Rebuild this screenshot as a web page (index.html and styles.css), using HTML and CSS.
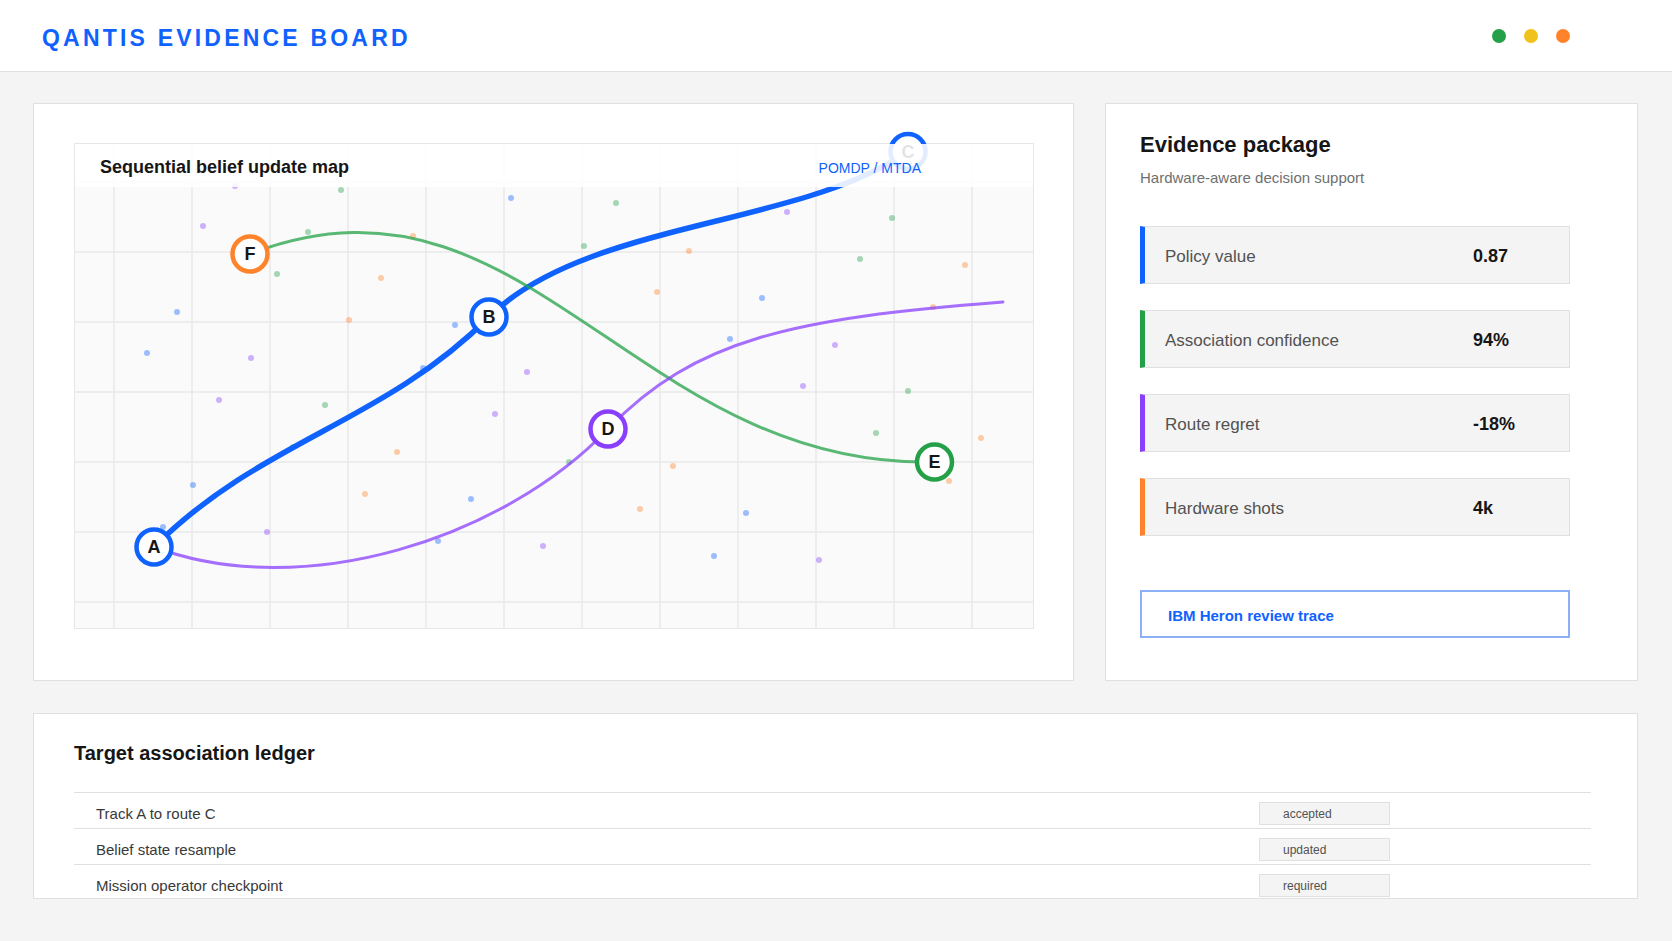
FILE: index.html
```html
<!DOCTYPE html>
<html lang="en">
<head>
  <meta charset="UTF-8">
  <title>Qantis Evidence Board</title>
  <link rel="stylesheet" href="styles.css">
</head>
<body>

  <header class="topbar">
    <h1 class="brand">QANTIS EVIDENCE BOARD</h1>
    <div class="signals">
      <span class="signal green"></span>
      <span class="signal yellow"></span>
      <span class="signal orange"></span>
    </div>
  </header>

  <main class="board">
    <section class="card map-card">
      <div class="map">
        <svg class="map-svg" viewBox="1 1 958 484">
          <g id="grid" class="grid"></g>
          <g id="dots"></g>
          <path class="route blue" d="M80 404 C187 297 308 281 415 174 C511 78 726 84 834 8.5"/>
          <path class="route green" d="M176 111 C450 5 560 326 860 319"/>
          <path class="route purple" d="M80 404 C230 460 430 395 534 286 C620 196 720 175 929 159"/>
          <g class="node blue"><circle cx="80" cy="404" r="17.5"/><text x="80" y="404">A</text></g>
          <g class="node blue"><circle cx="415" cy="174" r="17.5"/><text x="415" y="174">B</text></g>
          <g class="node blue"><circle cx="834" cy="8.5" r="17.5"/><text x="834" y="8.5">C</text></g>
          <g class="node purple"><circle cx="534" cy="286" r="17.5"/><text x="534" y="286">D</text></g>
          <g class="node green"><circle cx="860.5" cy="319" r="17.5"/><text x="860.5" y="319">E</text></g>
          <g class="node orange"><circle cx="176" cy="111" r="17.5"/><text x="176" y="111">F</text></g>
        </svg>
        <div class="map-head">
          <h2>Sequential belief update map</h2>
          <span class="map-tag">POMDP / MTDA</span>
        </div>
      </div>
    </section>

    <aside class="card evidence">
      <h2>Evidence package</h2>
      <p class="sub">Hardware-aware decision support</p>
      <div class="metrics">
        <div class="metric blue"><span>Policy value</span><strong>0.87</strong></div>
        <div class="metric green"><span>Association confidence</span><strong>94%</strong></div>
        <div class="metric purple"><span>Route regret</span><strong>-18%</strong></div>
        <div class="metric orange"><span>Hardware shots</span><strong>4k</strong></div>
      </div>
      <button class="trace-btn">IBM Heron review trace</button>
    </aside>

    <section class="card ledger">
      <h2>Target association ledger</h2>
      <div class="ledger-table">
        <div class="ledger-row"><span>Track A to route C</span><span class="badge">accepted</span></div>
        <div class="ledger-row"><span>Belief state resample</span><span class="badge">updated</span></div>
        <div class="ledger-row"><span>Mission operator checkpoint</span><span class="badge">required</span></div>
      </div>
    </section>
  </main>

  <script>
    const NS = 'http://www.w3.org/2000/svg';
    const grid = document.getElementById('grid');
    const dotLayer = document.getElementById('dots');

    function line(x1, y1, x2, y2) {
      const l = document.createElementNS(NS, 'line');
      l.setAttribute('x1', x1); l.setAttribute('y1', y1);
      l.setAttribute('x2', x2); l.setAttribute('y2', y2);
      grid.appendChild(l);
    }

    for (let k = 0; k < 12; k++) line(40 + 78 * k, 0, 40 + 78 * k, 486);
    for (let k = 0; k < 7; k++) line(0, 39 + 70 * k, 960, 39 + 70 * k);

    // scattered belief samples
    const dots = [
      [161,43,'p'],[267,47,'g'],[437,55,'b'],[542,60,'g'],[129,83,'p'],[234,89,'g'],
      [339,93,'o'],[713,69,'p'],[818,75,'g'],[510,103,'g'],[615,108,'o'],[786,116,'g'],
      [891,122,'o'],[203,131,'g'],[307,135,'o'],[583,149,'o'],[688,155,'b'],[859,164,'o'],
      [103,169,'b'],[275,177,'o'],[381,182,'b'],[656,196,'b'],[761,202,'p'],[73,210,'b'],
      [177,215,'p'],[349,225,'b'],[453,229,'p'],[729,243,'p'],[834,248,'g'],[145,257,'p'],
      [251,262,'g'],[421,271,'p'],[802,290,'g'],[907,295,'o'],[219,304,'g'],[323,309,'o'],
      [495,319,'g'],[599,323,'o'],[875,338,'o'],[119,342,'b'],[291,351,'o'],[397,356,'b'],
      [566,366,'o'],[672,370,'b'],[89,384,'b'],[193,389,'p'],[364,398,'b'],[469,403,'p'],
      [640,413,'b'],[745,417,'p']
    ];
    for (const [x, y, c] of dots) {
      const dot = document.createElementNS(NS, 'circle');
      dot.setAttribute('cx', x);
      dot.setAttribute('cy', y);
      dot.setAttribute('r', 3);
      dot.setAttribute('class', 'dot ' + c);
      dotLayer.appendChild(dot);
    }
  </script>

</body>
</html>
```

FILE: styles.css
```css
body {
  margin: 0;
  background: #f4f4f4;
  font-family: "Liberation Sans", Arial, sans-serif;
  color: #161616;
}
.topbar {
  height: 72px;
  box-sizing: border-box;
  background: #fff;
  border-bottom: 1px solid #e0e0e0;
  display: flex;
  justify-content: space-between;
  align-items: center;
  padding: 0 102px 0 42px;
}
.brand {
  margin: 5px 0 0;
  font-size: 23px;
  font-weight: bold;
  letter-spacing: 3.2px;
  color: #0f62fe;
}
.signals {
  display: flex;
  gap: 18px;
}
.signal {
  width: 14px;
  height: 14px;
  border-radius: 50%;
}
.signal.green { background: #24a148; }
.signal.yellow { background: #f1c21b; }
.signal.orange { background: #ff832b; }

.board {
  display: grid;
  grid-template-columns: 1fr 533px;
  column-gap: 31px;
  row-gap: 32px;
  padding: 31px 34px 0 33px;
}
.card {
  background: #fff;
  border: 1px solid #e0e0e0;
}

/* map */
.map-card {
  padding: 39px 39px 0 40px;
}
.map {
  position: relative;
  width: 960px;
  height: 486px;
  box-sizing: border-box;
  border: 1px solid #e6e6e6;
  background: #fafafa;
}
.map-svg {
  display: block;
  width: 958px;
  height: 484px;
  overflow: visible;
}
.grid line {
  stroke: #e8e8e8;
  stroke-width: 1.5;
}
.dot { opacity: 0.4; }
.dot.b { fill: #0f62fe; }
.dot.p { fill: #8a3ffc; }
.dot.g { fill: #24a148; }
.dot.o { fill: #ff832b; }
.route {
  fill: none;
  stroke-linecap: round;
}
.route.blue { stroke: #0f62fe; stroke-width: 5.5; }
.route.green { stroke: #24a148; stroke-width: 3; opacity: 0.75; }
.route.purple { stroke: #8a3ffc; stroke-width: 3; opacity: 0.75; }
.node circle {
  fill: #fff;
  stroke-width: 4.5;
}
.node.blue circle { stroke: #0f62fe; }
.node.purple circle { stroke: #8a3ffc; }
.node.green circle { stroke: #24a148; }
.node.orange circle { stroke: #ff832b; }
.node text {
  font-family: "Liberation Sans", Arial, sans-serif;
  font-size: 18px;
  font-weight: bold;
  fill: #161616;
  text-anchor: middle;
  dominant-baseline: central;
}
.map-head {
  position: absolute;
  top: 0;
  left: 0;
  right: 0;
  height: 43px;
  display: flex;
  justify-content: space-between;
  align-items: center;
  padding: 4px 112px 0 25px;
  background: rgba(255, 255, 255, 0.88);
  box-sizing: border-box;
}
.map-head h2 {
  margin: 0;
  font-size: 18px;
}
.map-tag {
  font-size: 14px;
  color: #0f62fe;
}

/* evidence */
.evidence {
  padding: 28px 34px 42px 34px;
}
.evidence h2 {
  margin: 0;
  font-size: 22px;
  line-height: 26px;
}
.sub {
  margin: 11px 0 0;
  font-size: 15px;
  line-height: 18px;
  color: #6f6f6f;
}
.metrics {
  margin-top: 39px;
  display: flex;
  flex-direction: column;
  gap: 26px;
  width: 430px;
}
.metric {
  display: grid;
  grid-template-columns: 1fr 72px;
  align-items: center;
  height: 58px;
  box-sizing: border-box;
  background: #f4f4f4;
  border: 1px solid #e0e0e0;
  border-left: 5px solid #0f62fe;
  padding: 3px 24px 0 20px;
}
.metric span {
  font-size: 17px;
  color: #525252;
}
.metric strong {
  font-size: 18px;
  color: #161616;
}
.metric.green { border-left-color: #24a148; }
.metric.purple { border-left-color: #8a3ffc; }
.metric.orange { border-left-color: #ff832b; }
.trace-btn {
  display: block;
  margin-top: 54px;
  width: 430px;
  height: 48px;
  background: #fff;
  border: 2px solid #8cb0f5;
  text-align: left;
  padding: 2px 0 0 26px;
  font-family: inherit;
  font-size: 15px;
  font-weight: bold;
  color: #0f62fe;
  cursor: pointer;
}

/* ledger */
.ledger {
  grid-column: 1 / -1;
  height: 186px;
  box-sizing: border-box;
  overflow: hidden;
  padding: 27px 46px 0 40px;
}
.ledger h2 {
  margin: 0;
  font-size: 20px;
  line-height: 24px;
}
.ledger-table {
  margin-top: 27px;
}
.ledger-row {
  display: grid;
  grid-template-columns: 1fr 332px;
  align-items: center;
  height: 36px;
  box-sizing: border-box;
  padding-top: 5px;
  border-top: 1px solid #e0e0e0;
  font-size: 15px;
  color: #393939;
}
.ledger-row span:first-child {
  padding-left: 22px;
}
.badge {
  width: 131px;
  height: 23px;
  line-height: 23px;
  box-sizing: border-box;
  padding-left: 23px;
  background: #f4f4f4;
  border: 1px solid #e0e0e0;
  font-size: 12px;
  color: #525252;
}
```
